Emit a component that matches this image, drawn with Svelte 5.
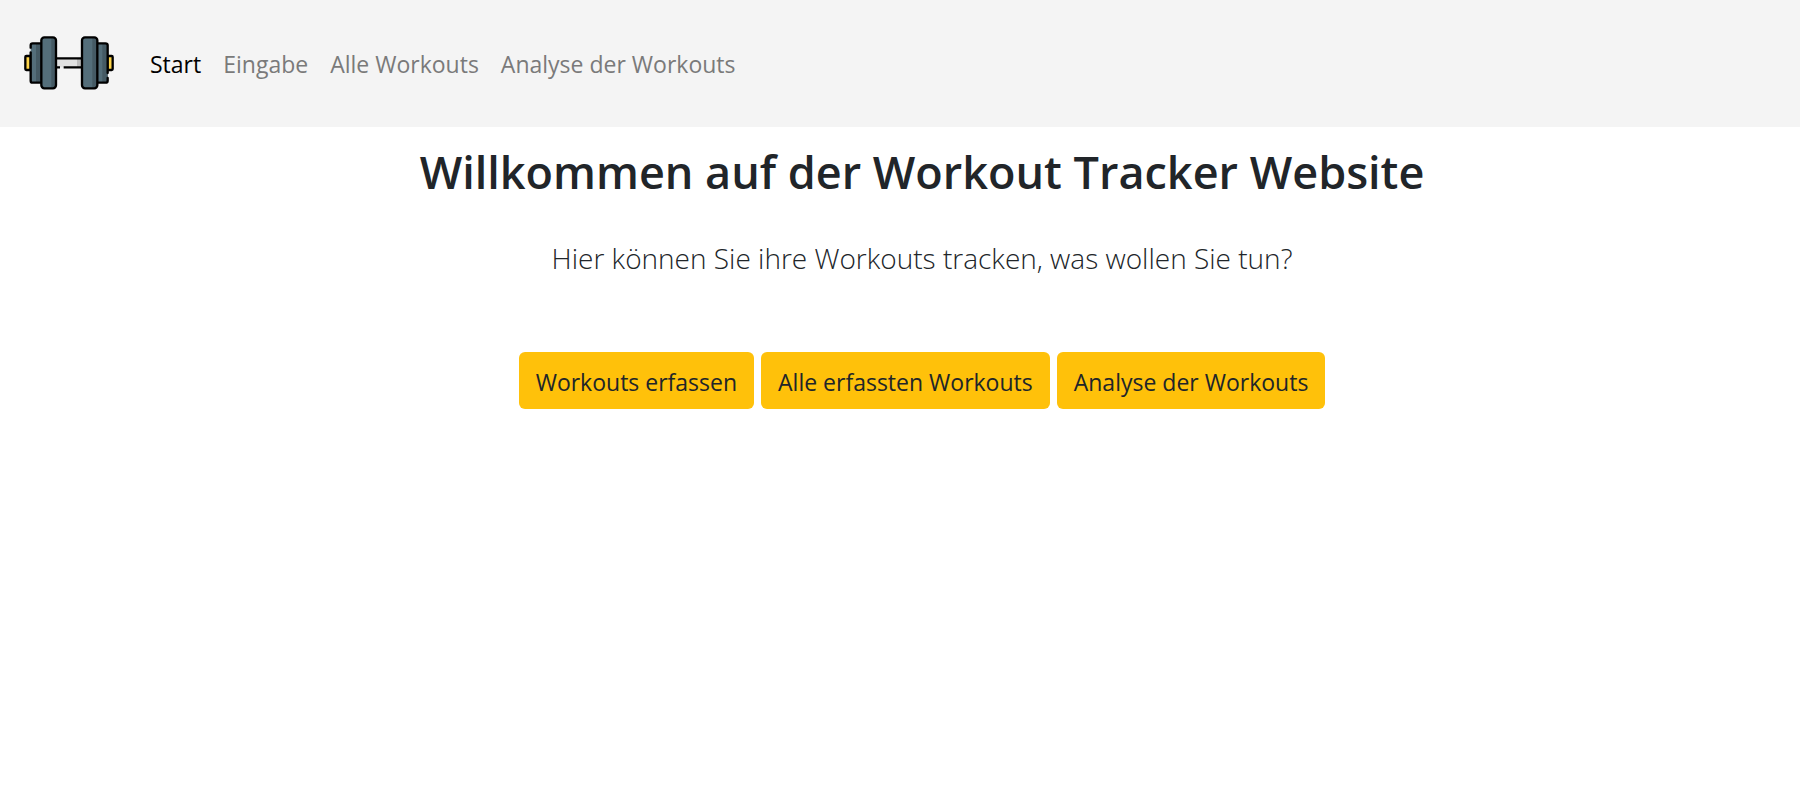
<script>
  const links = ['Start', 'Eingabe', 'Alle Workouts', 'Analyse der Workouts'];
  const actions = ['Workouts erfassen', 'Alle erfassten Workouts', 'Analyse der Workouts'];
  let active = $state('Start');
</script>

<header>
  <a class="brand" href="#start" aria-label="Workout Tracker">
    <svg viewBox="72 105 270 168" aria-hidden="true">
      <rect x="168" y="175" width="78" height="27" fill="#e1e1e1" />
      <rect x="231" y="175" width="15" height="27" fill="#bdbdbd" />
      <path d="M168 175H246M168 202H180M191 202H246" fill="none" stroke="#000" stroke-width="7" />
      <rect x="76" y="168" width="16" height="42" rx="3" fill="#ffd54a" stroke="#000" stroke-width="7" />
      <rect x="322" y="168" width="16" height="42" rx="3" fill="#ffd54a" stroke="#000" stroke-width="7" />
      <path d="M124 130H98Q92 130 92 136V242Q92 248 98 248H124Z" fill="#546e7a" />
      <path d="M108 130H124V248H108Z" fill="#455a64" />
      <path d="M124 130H98Q92 130 92 136V143M92 157V242Q92 248 98 248H124" fill="none" stroke="#000" stroke-width="7" stroke-linecap="round" />
      <path d="M292 130H316Q323 130 323 136V242Q323 248 316 248H292Z" fill="#546e7a" />
      <path d="M307 130H316Q323 130 323 136V242Q323 248 316 248H307Z" fill="#455a64" />
      <path d="M292 130H316Q323 130 323 136V219M323 234V242Q323 248 316 248H292" fill="none" stroke="#000" stroke-width="7" stroke-linecap="round" />
      <rect x="124" y="112" width="44" height="153" rx="9" fill="#546e7a" />
      <path d="M154 112H160Q168 112 168 121V256Q168 265 160 265H154Z" fill="#455a64" />
      <rect x="124" y="112" width="44" height="153" rx="9" fill="none" stroke="#000" stroke-width="7" />
      <rect x="246" y="112" width="46" height="153" rx="9" fill="#546e7a" />
      <path d="M277 112H283Q292 112 292 121V256Q292 265 283 265H277Z" fill="#455a64" />
      <rect x="246" y="112" width="46" height="153" rx="9" fill="none" stroke="#000" stroke-width="7" />
    </svg>
  </a>
  <nav>
    {#each links as link}
      <a href="#{link.toLowerCase().replaceAll(' ', '-')}" class:active={active === link} onclick={() => (active = link)}>{link}</a>
    {/each}
  </nav>
</header>

<main>
  <h1>Willkommen auf der Workout Tracker Website</h1>
  <p>Hier können Sie ihre Workouts tracken, was wollen Sie tun?</p>
  <div class="actions">
    {#each actions as action}
      <button type="button">{action}</button>
    {/each}
  </div>
</main>

<style>
  :global(body) {
    margin: 0;
    background: #fff;
    color: #212529;
    font-family: 'Segoe UI', 'Open Sans', 'Noto Sans', sans-serif;
  }
  header {
    display: flex;
    align-items: center;
    gap: 36px;
    padding: 35px 24px 36px;
    background: #f4f4f4;
  }
  .brand svg {
    display: block;
    width: 90px;
    height: 56px;
  }
  nav {
    display: flex;
    flex-wrap: wrap;
    gap: 22px;
    padding-top: 2px;
  }
  nav a {
    font-size: 23px;
    line-height: 36px;
    color: #7a7a7a;
    text-decoration: none;
  }
  nav a.active {
    color: #000;
  }
  main {
    padding: 15px 0 16px 44px;
    text-align: center;
  }
  h1 {
    margin: 0;
    font-size: 45px;
    line-height: 60px;
    font-weight: 600;
  }
  p {
    margin: 34px 0 0;
    font-size: 28px;
    line-height: 45px;
    font-weight: 300;
  }
  .actions {
    display: flex;
    flex-wrap: wrap;
    justify-content: center;
    gap: 7px;
    margin-top: 71px;
  }
  button {
    padding: 12px 17px 9px;
    border: 0;
    border-radius: 6px;
    background: #ffc10a;
    color: #212529;
    font-family: inherit;
    font-size: 23px;
    line-height: 36px;
    cursor: pointer;
  }
</style>
